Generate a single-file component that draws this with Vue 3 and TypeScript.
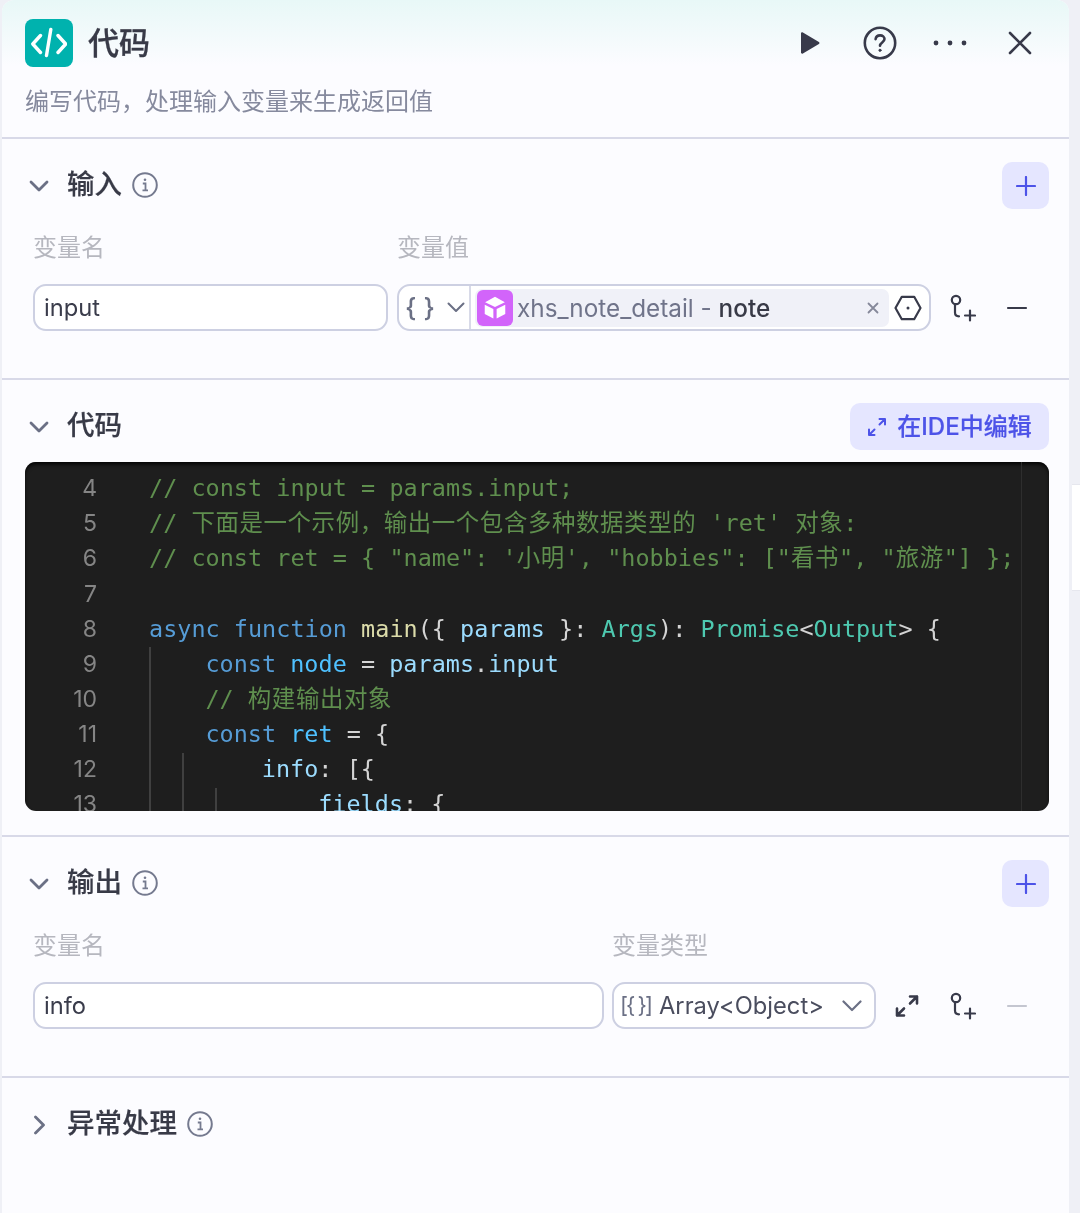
<script setup lang="ts">
interface Tok { t: string; c: string }
interface Line { n: number; indent: number; toks: Tok[] }
const lines: Line[] = [
  { n: 4, indent: 0, toks: [{ t: '// const input = params.input;', c: 'cm' }] },
  { n: 5, indent: 0, toks: [
    { t: '// ', c: 'cm' }, { t: '下面是一个示例，输出一个包含多种数据类型的', c: 'cm zh' }, { t: " 'ret' ", c: 'cm' }, { t: '对象', c: 'cm zh' }, { t: ':', c: 'cm' } ] },
  { n: 6, indent: 0, toks: [
    { t: '// const ret = { "name": \'', c: 'cm' }, { t: '小明', c: 'cm zh' }, { t: '\', "hobbies": ["', c: 'cm' }, { t: '看书', c: 'cm zh' },
    { t: '", "', c: 'cm' }, { t: '旅游', c: 'cm zh' }, { t: '"] };', c: 'cm' } ] },
  { n: 7, indent: 0, toks: [] },
  { n: 8, indent: 0, toks: [
    { t: 'async function ', c: 'kw' }, { t: 'main', c: 'fn' }, { t: '({ ', c: 'pl' }, { t: 'params', c: 'va' },
    { t: ' }: ', c: 'pl' }, { t: 'Args', c: 'ty' }, { t: '): ', c: 'pl' }, { t: 'Promise', c: 'ty' }, { t: '<', c: 'pl' },
    { t: 'Output', c: 'ty' }, { t: '> {', c: 'pl' } ] },
  { n: 9, indent: 4, toks: [
    { t: 'const ', c: 'kw' }, { t: 'node', c: 'co' }, { t: ' = ', c: 'pl' }, { t: 'params', c: 'va' }, { t: '.', c: 'pl' }, { t: 'input', c: 'va' } ] },
  { n: 10, indent: 4, toks: [{ t: '// ', c: 'cm' }, { t: '构建输出对象', c: 'cm zh' }] },
  { n: 11, indent: 4, toks: [{ t: 'const ', c: 'kw' }, { t: 'ret', c: 'co' }, { t: ' = {', c: 'pl' }] },
  { n: 12, indent: 8, toks: [{ t: 'info', c: 'va' }, { t: ': [{', c: 'pl' }] },
  { n: 13, indent: 12, toks: [{ t: 'fields', c: 'va' }, { t: ': {', c: 'pl' }] },
]
</script>

<template>
  <div class="page">
    <main class="panel">
      <header class="top">
        <div class="top-row">
          <div class="logo">
            <svg width="36" height="36" viewBox="0 0 36 36" fill="none" stroke="#fff" stroke-width="3.400" stroke-linecap="round" stroke-linejoin="round">
              <path d="M9.500 10.500 1.800 19l7.700 8.500M27 10.500 34.700 19 27 27.500M19.800 4.500 15.500 30.500" />
            </svg>
          </div>
          <h1 class="title">代码</h1>
          <div class="top-actions">
            <span class="slot">
              <svg width="22" height="24" viewBox="0 0 22 24"><path d="M2 2.400c0-1 1-1.500 1.900-1l16 9.600c.8.500.8 1.600 0 2l-16 9.600c-.9.500-1.900-.1-1.900-1z" fill="#383a4a" /></svg>
            </span>
            <span class="slot">
              <svg width="34" height="34" viewBox="0 0 34 34" fill="none" stroke="#383a4a" stroke-width="2.600" stroke-linecap="round">
                <circle cx="17" cy="17" r="15.200" />
                <path d="M12.600 13.200c.3-2.400 2.200-3.800 4.500-3.800 2.500 0 4.400 1.500 4.400 3.700 0 3.300-4.500 3.400-4.500 6.600" />
                <circle cx="17" cy="24.300" r="1.100" fill="#383a4a" stroke-width="1" />
              </svg>
            </span>
            <span class="slot">
              <svg width="34" height="8" viewBox="0 0 34 8" fill="#383a4a"><circle cx="3" cy="4" r="2.400" /><circle cx="17" cy="4" r="2.400" /><circle cx="31" cy="4" r="2.400" /></svg>
            </span>
            <span class="slot">
              <svg width="24" height="24" viewBox="0 0 24 24" fill="none" stroke="#383a4a" stroke-width="2.600" stroke-linecap="round"><path d="M2 2l20 20M22 2 2 22" /></svg>
            </span>
          </div>
        </div>
        <p class="sub">编写代码，处理输入变量来生成返回值</p>
      </header>

      <section class="sec sec-io">
        <div class="sec-head">
          <span class="chev"><svg width="20" height="12" viewBox="0 0 20 12" fill="none" stroke="#6b7085" stroke-width="2.800" stroke-linecap="round" stroke-linejoin="round"><path d="M2 2l8 8 8-8" /></svg></span>
          <h2 class="sec-title">输入</h2>
          <span class="info">
            <svg width="26" height="26" viewBox="0 0 26 26" fill="none" stroke="#757a8f" stroke-width="2"><circle cx="13" cy="13" r="11.800" /><path d="M10.800 11.500H13.500V18M10.500 18.400H16" stroke-width="1.800" /><circle cx="13" cy="7.800" r="1.300" fill="#757a8f" stroke="none" /></svg>
          </span>
          <button class="add">
            <svg width="20" height="20" viewBox="0 0 20 20" stroke="#4d53e8" stroke-width="2.200" stroke-linecap="round"><path d="M10 1v18M1 10h18" /></svg>
          </button>
        </div>
        <div class="grid grid-in labels">
          <span>变量名</span>
          <span>变量值</span>
        </div>
        <div class="grid grid-in row">
          <div class="field">input</div>
          <div class="field value">
            <span class="type-pick">
              <span class="braces">{ }</span>
              <svg width="18" height="11" viewBox="0 0 18 11" fill="none" stroke="#6b7085" stroke-width="2" stroke-linecap="round" stroke-linejoin="round"><path d="M1.500 1.500 9 9l7.500-7.500" /></svg>
            </span>
            <span class="pill">
              <span class="cube">
                <svg width="22" height="23" viewBox="0 0 26 28" fill="#fff">
                  <path d="M13 1 25 7.500 13 13.500 1 7.500z" />
                  <path d="M0.500 10.500 11 15.800V27.500L0.500 22z" />
                  <path d="M25.500 10.500 15 15.800V27.500L25.500 22z" />
                </svg>
              </span>
              <span class="var-text">xhs_note_detail - <b>note</b></span>
              <svg class="pill-x" width="12" height="12" viewBox="0 0 12 12" fill="none" stroke="#85889a" stroke-width="1.800" stroke-linecap="round"><path d="M1.500 1.500l9 9M10.500 1.500l-9 9" /></svg>
            </span>
            <span class="hex">
              <svg width="28" height="26" viewBox="0 0 28 26" fill="none" stroke="#383a4a" stroke-width="2.200" stroke-linejoin="round"><path d="M1.500 13 7.800 1.800h12.400L26.500 13l-6.300 11.200H7.800z" /><circle cx="14" cy="13" r="1.500" fill="#383a4a" stroke="none" /></svg>
            </span>
          </div>
          <div class="acts">
            <span class="slot-s">
              <svg width="28" height="28" viewBox="1 0 28 28" fill="none" stroke="#383a4a" stroke-width="2.200" stroke-linecap="round"><circle cx="9" cy="6" r="4.200" /><path d="M8 10.500v8c0 2.500 1.500 3.800 4 3.800M18 21.500h10M23 16.500v10" /></svg>
            </span>
            <span class="slot-s">
              <svg width="22" height="4" viewBox="0 0 22 4" stroke="#383a4a" stroke-width="2.200" stroke-linecap="round"><path d="M2 2h18" /></svg>
            </span>
          </div>
        </div>
      </section>

      <section class="sec sec-code">
        <div class="sec-head">
          <span class="chev"><svg width="20" height="12" viewBox="0 0 20 12" fill="none" stroke="#6b7085" stroke-width="2.800" stroke-linecap="round" stroke-linejoin="round"><path d="M2 2l8 8 8-8" /></svg></span>
          <h2 class="sec-title">代码</h2>
          <button class="ide">
            <svg width="20" height="20" viewBox="0 0 20 20" fill="none" stroke="#4d53e8" stroke-width="2" stroke-linecap="round" stroke-linejoin="round"><path d="M12.500 2H18v5.500M18 2l-5.500 5.500M7.500 18H2v-5.500M2 18l5.500-5.500" /></svg>
            <span>在IDE中编辑</span>
          </button>
        </div>
        <div class="editor">
          <div class="code">
            <div v-for="l in lines" :key="l.n" class="line">
              <span class="ln">{{ l.n }}</span>
              <span class="src" :style="{ paddingLeft: l.indent * 14.1 + 'px' }"><span v-for="(k, i) in l.toks" :key="i" :class="k.c">{{ k.t }}</span></span>
            </div>
          </div>
          <i class="guide g1"></i>
          <i class="guide g2"></i>
          <i class="guide g3"></i>
          <i class="ruler"></i>
        </div>
      </section>

      <section class="sec sec-io">
        <div class="sec-head">
          <span class="chev"><svg width="20" height="12" viewBox="0 0 20 12" fill="none" stroke="#6b7085" stroke-width="2.800" stroke-linecap="round" stroke-linejoin="round"><path d="M2 2l8 8 8-8" /></svg></span>
          <h2 class="sec-title">输出</h2>
          <span class="info">
            <svg width="26" height="26" viewBox="0 0 26 26" fill="none" stroke="#757a8f" stroke-width="2"><circle cx="13" cy="13" r="11.800" /><path d="M10.800 11.500H13.500V18M10.500 18.400H16" stroke-width="1.800" /><circle cx="13" cy="7.800" r="1.300" fill="#757a8f" stroke="none" /></svg>
          </span>
          <button class="add">
            <svg width="20" height="20" viewBox="0 0 20 20" stroke="#4d53e8" stroke-width="2.200" stroke-linecap="round"><path d="M10 1v18M1 10h18" /></svg>
          </button>
        </div>
        <div class="grid grid-out labels">
          <span>变量名</span>
          <span>变量类型</span>
        </div>
        <div class="grid grid-out row">
          <div class="field">info</div>
          <div class="field select">
            <span class="arr">[{ }]</span>
            <span class="sel-text">Array&lt;Object&gt;</span>
            <svg width="20" height="12" viewBox="0 0 20 12" fill="none" stroke="#6b7085" stroke-width="2.200" stroke-linecap="round" stroke-linejoin="round"><path d="M1.500 1.500 10 10l8.500-8.500" /></svg>
          </div>
          <div class="acts">
            <span class="slot-s">
              <svg width="24" height="24" viewBox="0 0 24 24" fill="none" stroke="#383a4a" stroke-width="2.600" stroke-linecap="round" stroke-linejoin="round"><path d="M15 2.500h7v7M22 2.500l-7 7M9 21.500H2v-7M2 21.500l7-7" /></svg>
            </span>
            <span class="slot-s">
              <svg width="28" height="28" viewBox="1 0 28 28" fill="none" stroke="#383a4a" stroke-width="2.200" stroke-linecap="round"><circle cx="9" cy="6" r="4.200" /><path d="M8 10.500v8c0 2.500 1.500 3.800 4 3.800M18 21.500h10M23 16.500v10" /></svg>
            </span>
            <span class="slot-s">
              <svg width="22" height="4" viewBox="0 0 22 4" stroke="#c4c6d0" stroke-width="2.200" stroke-linecap="round"><path d="M2 2h18" /></svg>
            </span>
          </div>
        </div>
      </section>

      <section class="sec sec-last">
        <div class="sec-head">
          <span class="chev"><svg width="12" height="20" viewBox="0 0 12 20" fill="none" stroke="#6b7085" stroke-width="2.800" stroke-linecap="round" stroke-linejoin="round"><path d="M2.500 2l8 8-8 8" /></svg></span>
          <h2 class="sec-title">异常处理</h2>
          <span class="info">
            <svg width="26" height="26" viewBox="0 0 26 26" fill="none" stroke="#757a8f" stroke-width="2"><circle cx="13" cy="13" r="11.800" /><path d="M10.800 11.500H13.500V18M10.500 18.400H16" stroke-width="1.800" /><circle cx="13" cy="7.800" r="1.300" fill="#757a8f" stroke="none" /></svg>
          </span>
        </div>
      </section>
    </main>
    <aside class="side"><div class="side-card"></div></aside>
  </div>
</template>

<style>
html, body { margin: 0; background: #eff0f6; }
</style>

<style scoped>
* { box-sizing: border-box; }
.page {
  display: flex;
  width: 1080px;
  height: 1213px;
  overflow: hidden;
  background: #eff0f6;
  padding-left: 2px;
  font-family: Inter, "Noto Sans CJK SC", sans-serif;
  color: #383a4a;
  filter: blur(0.4px);
}
.panel {
  width: 1067px;
  flex: none;
  background: #fcfcff;
  border-radius: 12px 12px 0 0;
  overflow: hidden;
}
.side { flex: 1; padding-top: 484px; }
.side-card {
  height: 107px;
  margin-left: 3px;
  background: #fff;
  border-top: 1px solid #e6e7ee;
  border-bottom: 1px solid #e6e7ee;
}
.top {
  height: 139px;
  padding: 19px 14px 0 23px;
  background: linear-gradient(180deg, #e8f8f7 0, #fcfcff 66px);
  border-bottom: 2px solid #d8d9e8;
}
.top-row { display: flex; align-items: center; height: 48px; }
.logo {
  width: 48px;
  height: 48px;
  border-radius: 8px;
  background: #00b2ae;
  display: flex;
  align-items: center;
  justify-content: center;
}
.title {
  margin: 0 0 0 15px;
  font-size: 31px;
  line-height: 48px;
  font-weight: 500;
  -webkit-text-stroke: 0.3px #383a47;
  color: #383a47;
}
.top-actions { margin-left: auto; display: flex; }
.slot { width: 70px; height: 48px; display: flex; align-items: center; justify-content: center; }
.sub {
  margin: 17px 0 0 0;
  font-size: 24px;
  line-height: 36px;
  color: #868a9e;
}
.sec { border-bottom: 2px solid #d8d9e8; padding: 23px 20px 0 23px; }
.sec-io { height: 241px; }
.sec-code { height: 457px; }
.sec-last { border-bottom: 0; }
.sec-head { display: flex; align-items: center; height: 47px; }
.chev { width: 28px; display: flex; justify-content: center; flex: none; }
.sec-title {
  margin: 0 0 2px 14px;
  font-size: 27.500px;
  line-height: 45px;
  font-weight: 500;
  -webkit-text-stroke: 0.2px #383a47;
  color: #383a47;
}
.info { margin: 0 0 2px 10px; display: flex; }
.add {
  margin-left: auto;
  width: 47px;
  height: 47px;
  border: 0;
  border-radius: 10px;
  background: #e5e6ff;
  display: flex;
  align-items: center;
  justify-content: center;
  padding: 0;
}
.ide {
  margin-left: auto;
  width: 199px;
  height: 47px;
  border: 0;
  border-radius: 10px;
  background: #e5e6ff;
  color: #4d53e8;
  display: flex;
  align-items: center;
  justify-content: center;
  gap: 10px;
  padding: 0;
  font: 500 24px/47px Inter, "Noto Sans CJK SC", sans-serif;
  -webkit-text-stroke: 0.2px #4d53e8;
}
.grid { display: grid; column-gap: 9px; margin-left: 8px; }
.grid-in { grid-template-columns: 355px 534px 1fr; }
.grid-out { grid-template-columns: 571px 264px 1fr; column-gap: 8px; }
.labels {
  margin-top: 22px;
  font-size: 24px;
  line-height: 34px;
  color: #b6b7bf;
}
.row { margin-top: 19px; height: 47px; }
.field {
  border: 2px solid #cdd0e2;
  border-radius: 13px;
  background: #fff;
  height: 47px;
  padding-left: 9px;
  font-size: 23.700px;
  line-height: 43px;
  color: #3a3c4b;
  min-width: 0;
}
.value { display: flex; align-items: center; padding: 0; }
.type-pick {
  width: 72px;
  height: 100%;
  flex: none;
  border-right: 2px solid #d8dae8;
  display: flex;
  align-items: center;
  gap: 12px;
  padding-left: 6px;
}
.braces { font: 500 26px/43px Inter, sans-serif; color: #6b7085; white-space: nowrap; }
.pill {
  margin-left: 4px;
  width: 414px;
  height: 38px;
  background: #f0f1f8;
  border-radius: 7px;
  display: flex;
  align-items: center;
  padding-left: 2px;
  flex: none;
}
.cube {
  width: 36px;
  height: 36px;
  background: #d264fa;
  border-radius: 6px;
  display: flex;
  align-items: center;
  justify-content: center;
  flex: none;
}
.var-text { margin-left: 4px; font-size: 24.300px; line-height: 36px; color: #70748a; white-space: nowrap; }
.var-text b { font-weight: 500; color: #383a47; }
.pill-x { margin-left: auto; margin-right: 10px; }
.hex { margin-left: 5px; display: flex; }
.acts { display: flex; justify-content: flex-end; padding-right: 4.500px; align-items: center; min-width: 0; }
.slot-s { width: 55px; flex: none; display: flex; justify-content: center; align-items: center; }
.select { display: flex; align-items: center; padding: 0 12px 0 6px; }
.arr { width: 31px; flex: none; font: 22px/43px Inter, sans-serif; color: #6b7085; letter-spacing: -2px; white-space: nowrap; }
.sel-text { margin-left: 8px; font-size: 23.700px; color: #4a4d5e; white-space: nowrap; }
.select svg { margin-left: auto; flex: none; }
.editor {
  position: relative;
  margin: 12px 0 0 0;
  height: 349px;
  border-radius: 11px;
  background: #1e1e1e;
  overflow: hidden;
  box-shadow: inset 0 3px 4px -1px #000;
}
.code {
  padding-top: 9.300px;
  font: 23.45px/35.1px "DejaVu Sans Mono", "Noto Sans CJK SC", monospace;
  letter-spacing: 0.03px;
  white-space: pre;
}
.line { display: flex; height: 35.1px; }
.ln { width: 72px; flex: none; text-align: right; color: #858585; font-family: Inter, sans-serif; font-size: 23px; letter-spacing: 0; }
.src { margin-left: 52px; }
.zh { letter-spacing: 0.6px; }
.cm { color: #5f8f4e; }
.kw { color: #569cd6; }
.fn { color: #dcdcaa; }
.va { color: #9cdcfe; }
.co { color: #4fc1ff; }
.ty { color: #4ec9b0; }
.pl { color: #d4d4d4; }
.guide { position: absolute; bottom: 0; width: 1.500px; background: #404040; }
.g1 { left: 124px; top: 185px; }
.g2 { left: 157px; top: 291px; }
.g3 { left: 190px; top: 326px; }
.ruler { position: absolute; left: 996px; top: 0; bottom: 0; width: 1px; background: #2e2e2e; }
</style>
